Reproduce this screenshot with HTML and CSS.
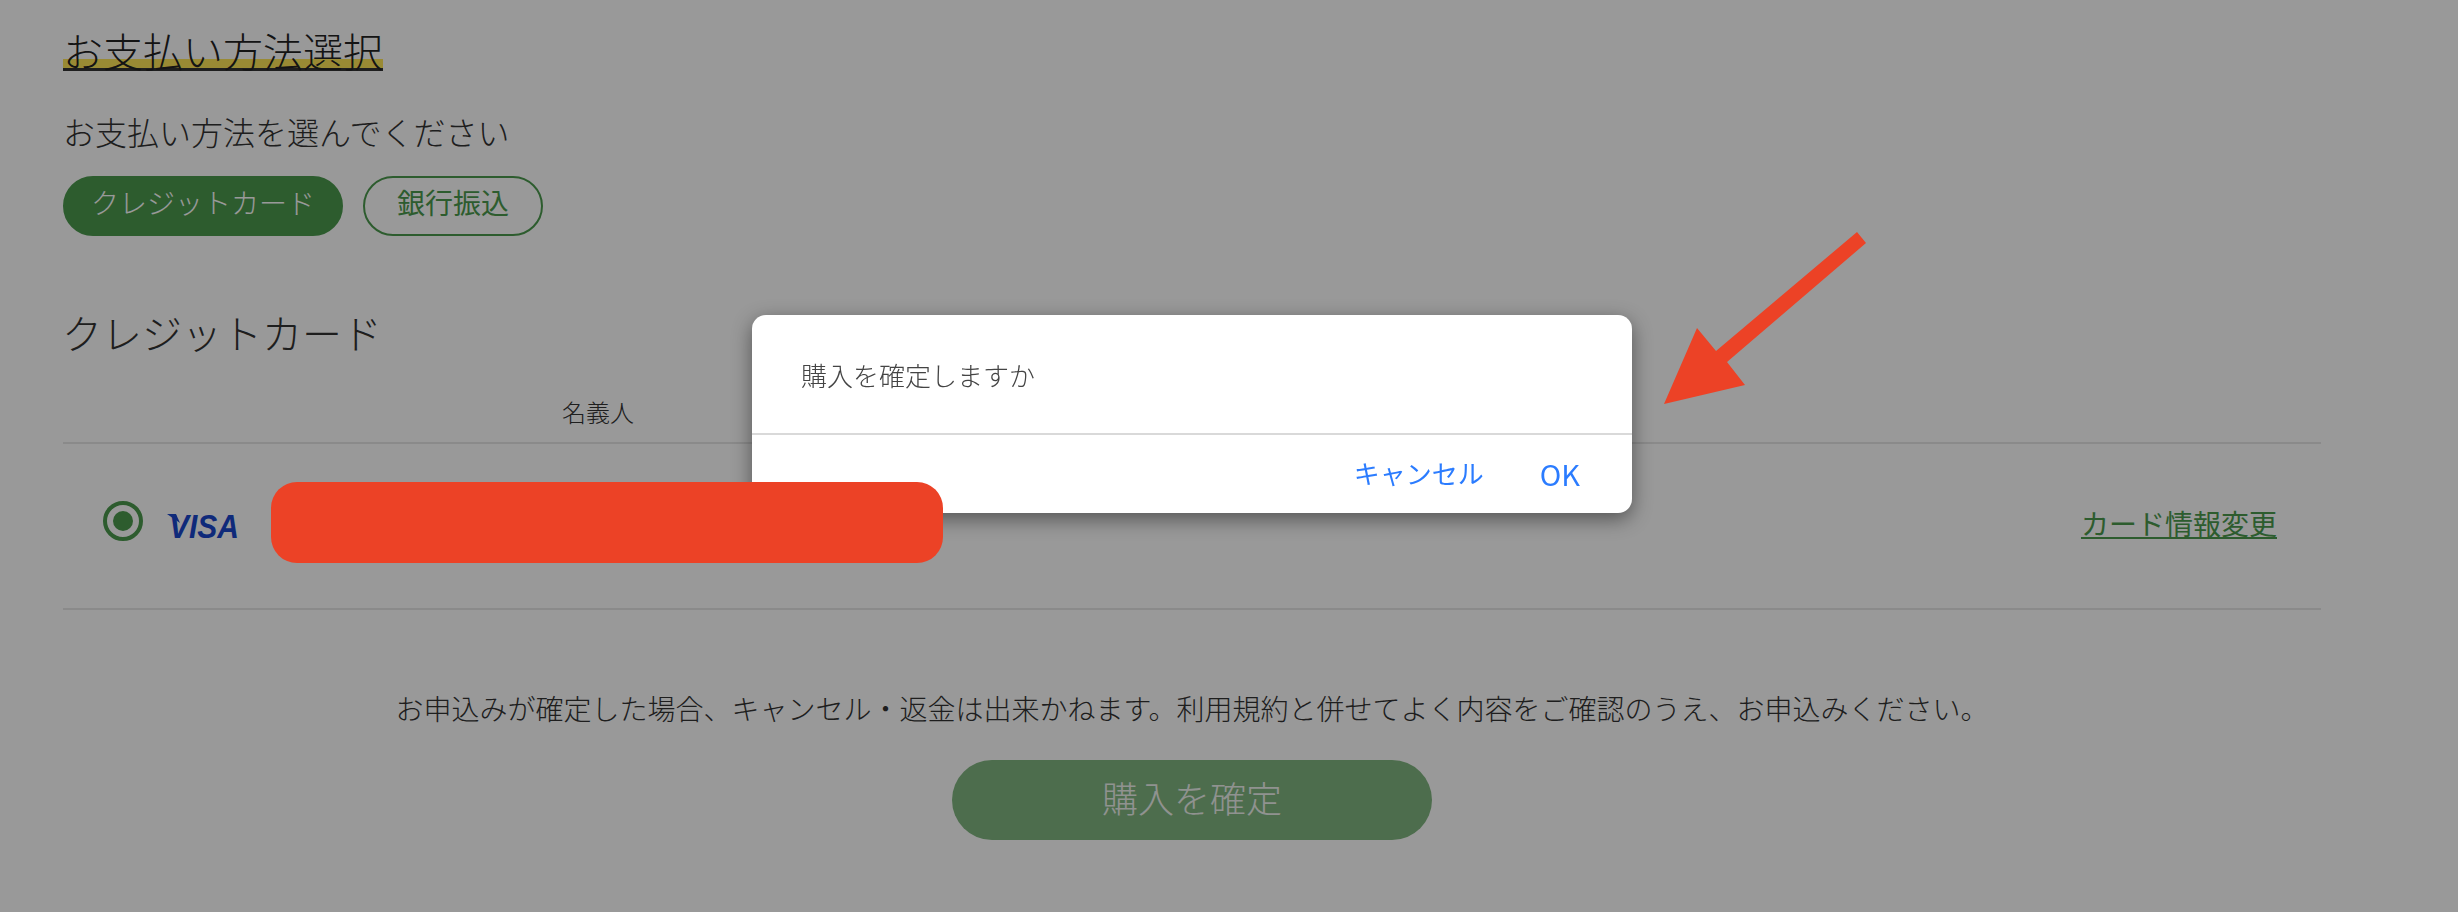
FILE: index.html
```html
<!DOCTYPE html>
<html lang="ja">
  <head>
    <meta charset="UTF-8" />
    <title>お支払い方法選択</title>
    <link rel="stylesheet" href="styles.css">
  </head>
  <body>
    <div class="page">
      <h2 class="section-title"><span>お支払い方法選択</span></h2>
      <p class="lead">お支払い方法を選んでください</p>
      <div class="pay-tabs">
        <button class="pill pill-active">クレジットカード</button>
        <button class="pill">銀行振込</button>
      </div>

      <h3 class="sub-title">クレジットカード</h3>
      <div class="card-head">
        <div class="card-head-name">名義人</div>
      </div>
      <div class="card-row">
        <span class="radio"><span class="radio-dot"></span></span>
        <svg class="visa" width="86" height="36" viewBox="0 0 86 36">
          <polygon points="0,6 9,6 13,15" />
          <text x="2" y="30" textLength="70" lengthAdjust="spacingAndGlyphs">VISA</text>
        </svg>
        <a class="card-edit" href="#">カード情報変更</a>
      </div>

      <p class="notice">お申込みが確定した場合、キャンセル・返金は出来かねます。利用規約と併せてよく内容をご確認のうえ、お申込みください。</p>
      <button class="confirm" disabled>購入を確定</button>
    </div>

    <div class="overlay"></div>

    <div class="dialog">
      <div class="dialog-body">購入を確定しますか</div>
      <div class="dialog-actions">
        <a href="#">キャンセル</a>
        <a class="dialog-ok" href="#">OK</a>
      </div>
    </div>

    <!-- annotations drawn over the screenshot -->
    <div class="redaction"></div>
    <svg class="arrow" width="202" height="173" viewBox="0 0 202 173">
      <polygon points="193,0 202,11 63,130 81,153 0,172 33,96 52,119" />
    </svg>
  </body>
</html>
```

FILE: styles.css
```css
* {
  box-sizing: border-box;
}
html, body {
  height: 100%;
}
body {
  margin: 0;
  background-color: #fff;
  color: #333;
  font-family: "Noto Sans CJK JP", "Liberation Sans", sans-serif;
  font-weight: 300;
  overflow: hidden;
}
.page {
  width: 2258px;
  margin-left: 63px;
  padding-top: 32px;
}
.section-title {
  margin: 0;
  font-size: 40px;
  font-weight: 300;
  line-height: 36px;
}
.section-title span {
  display: inline-block;
  color: #222;
  line-height: 36px;
  border-bottom: 3px solid #333;
  background: linear-gradient(transparent 75%, #ffe658 75%);
}
.lead {
  margin: 38px 0 0;
  font-size: 32px;
  line-height: 44px;
}
.pay-tabs {
  display: flex;
  gap: 20px;
  margin-top: 23px;
}
.pill {
  height: 60px;
  padding: 0 32px 9px;
  border: 2px solid #4b9a4e;
  border-radius: 30px;
  background-color: #fff;
  color: #4b9a4e;
  font-family: inherit;
  font-size: 28px;
  font-weight: 400;
  line-height: 1;
}
.pill-active {
  width: 280px;
  padding: 0 26px 9px;
  background-color: #4b9a4e;
  color: #fff;
  font-weight: 300;
}
.sub-title {
  margin: 68px 0 2px;
  font-size: 40px;
  font-weight: 300;
  line-height: 56px;
  text-indent: -1px;
}
.card-head {
  display: flex;
  height: 82px;
  padding-top: 33px;
  border-bottom: 2px solid #e6e6e6;
}
.card-head-name {
  width: 1070px;
  font-size: 24px;
  line-height: 34px;
  text-align: center;
}
.card-row {
  display: flex;
  align-items: center;
  height: 166px;
  padding: 0 44px 0 40px;
  border-bottom: 2px solid #e6e6e6;
}
.radio {
  display: flex;
  align-items: center;
  justify-content: center;
  width: 40px;
  height: 40px;
  margin-bottom: 10px;
  border: 4px solid #4b9a4e;
  border-radius: 50%;
}
.radio-dot {
  width: 20px;
  height: 20px;
  border-radius: 50%;
  background-color: #4b9a4e;
}
.visa {
  margin-left: 24px;
  fill: #1a46cc;
}
.visa text {
  font-family: "Liberation Sans", sans-serif;
  font-size: 33px;
  font-style: italic;
  font-weight: 700;
}
.card-edit {
  margin: 0 0 6px auto;
  color: #4b9a4e;
  font-size: 28px;
  font-weight: 400;
  line-height: 40px;
}
.notice {
  margin: 78px 0 0;
  font-size: 28px;
  line-height: 40px;
  text-align: center;
}
.confirm {
  display: block;
  width: 480px;
  height: 80px;
  margin: 32px auto 0;
  padding: 0 0 6px;
  border: none;
  border-radius: 40px;
  background-color: #80b680;
  color: #f0f4f0;
  font-family: inherit;
  font-size: 36px;
  font-weight: 300;
}
.overlay {
  position: fixed;
  top: 0;
  right: 0;
  bottom: 0;
  left: 0;
  background-color: rgba(0,0,0,0.4);
}
.dialog {
  position: absolute;
  top: 315px;
  left: 752px;
  width: 880px;
  height: 198px;
  border-radius: 14px;
  background-color: #fff;
  box-shadow: 0 6px 20px rgba(0,0,0,0.45);
}
.dialog-body {
  display: flex;
  align-items: center;
  height: 120px;
  padding: 0 0 0 49px;
  border-bottom: 2px solid #d9d9d9;
  color: #444;
  font-size: 26px;
}
.dialog-actions {
  display: flex;
  justify-content: flex-end;
  align-items: center;
  gap: 56px;
  height: 78px;
  padding: 0 52px 3px 0;
}
.dialog-actions a {
  color: #2b7cff;
  font-size: 26px;
  font-weight: 400;
  text-decoration: none;
}
.dialog-actions .dialog-ok {
  font-size: 29px;
}
.redaction {
  position: absolute;
  top: 482px;
  left: 271px;
  width: 672px;
  height: 81px;
  border-radius: 26px;
  background-color: #ec4226;
}
.arrow {
  position: absolute;
  top: 232px;
  left: 1664px;
  fill: #ec4226;
}
```
